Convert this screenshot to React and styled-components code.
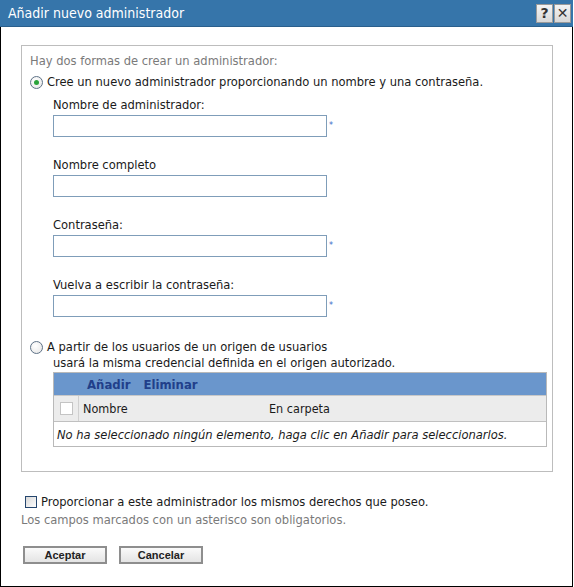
import React from "react";
import styled, { createGlobalStyle } from "styled-components";

const Global = createGlobalStyle`
  html, body { margin: 0; padding: 0; background: #fff; }
  body { font-family: "DejaVu Sans Condensed", "DejaVu Sans", sans-serif; font-size: 12.8px; color: #1a1a1a; }
`;

const Dialog = styled.div`
  width: 573px;
  height: 587px;
  box-sizing: border-box;
  border: 1px solid #000;
  border-top: none;
  display: flex;
  flex-direction: column;
  background: #fff;
`;

const TitleBar = styled.div`
  height: 27px;
  margin: 0 -1px;
  background: #3675aa;
  border-bottom: 1px solid #2a5f8c;
  display: flex;
  align-items: center;
  justify-content: space-between;
  padding: 0 2px 0 8px;
  box-sizing: border-box;
`;

const Title = styled.span`
  color: #fff;
  font-size: 14px;
  line-height: 16px;
`;

const TitleButtons = styled.div`
  display: flex;
  gap: 1px;
`;

const TitleButton = styled.span`
  width: 17px;
  height: 19px;
  box-sizing: border-box;
  background: linear-gradient(#f4f4f4, #d8d8d8);
  border: 1px solid #9a9a9a;
  color: #333;
  font-family: "DejaVu Sans", sans-serif;
  font-weight: bold;
  font-size: 14px;
  display: flex;
  align-items: center;
  justify-content: center;
`;

const Content = styled.div`
  padding: 18px 0 0 20px;
`;

const Fieldset = styled.div`
  width: 532px;
  box-sizing: border-box;
  border: 1px solid #bdbdbd;
  padding: 7px 5px 24px 8px;
`;

const Muted = styled.div`
  color: #7a7a7a;
  line-height: 16px;
  margin-left: ${(p) => p.$indent || 0}px;
  margin-top: ${(p) => p.$top || 0}px;
`;

const RadioRow = styled.label`
  display: flex;
  align-items: center;
  gap: 4px;
  line-height: 16px;
  margin-top: ${(p) => p.$top || 0}px;
`;

const Radio = styled.span`
  width: 13px;
  height: 13px;
  box-sizing: border-box;
  border-radius: 50%;
  border: 1px solid #5e7287;
  background: radial-gradient(circle at 40% 35%, #ffffff, #e4e4e4);
  display: inline-flex;
  align-items: center;
  justify-content: center;
  &::after {
    content: "";
    width: 5px;
    height: 5px;
    border-radius: 50%;
    background: ${(p) => (p.$checked ? "#2aa33a" : "transparent")};
  }
`;

const Indent = styled.div`
  padding-left: 23px;
`;

const Field = styled.div`
  margin-top: ${(p) => p.$top}px;
`;

const Label = styled.div`
  line-height: 16px;
`;

const InputRow = styled.div`
  display: flex;
  align-items: flex-start;
  margin-top: 2px;
`;

const Input = styled.div`
  width: 274px;
  height: 22px;
  box-sizing: border-box;
  border: 1px solid #7f9db9;
  background: #fff;
`;

const Asterisk = styled.span`
  color: #3d68c9;
  font-size: 9px;
  line-height: 9px;
  margin: 6px 0 0 2px;
`;

const Table = styled.div`
  margin-top: 1px;
  width: 494px;
  box-sizing: border-box;
  border: 1px solid #b9b9b9;
`;

const Toolbar = styled.div`
  height: 22px;
  background: #6a96cc;
  display: flex;
  align-items: center;
  gap: 13px;
  padding-left: 33px;
`;

const ToolLink = styled.span`
  color: #213f8a;
  font-size: 13px;
  font-weight: 600;
`;

const HeaderRow = styled.div`
  height: 25px;
  background: #ececec;
  border-top: 1px solid #c8c8c8;
  border-bottom: 1px solid #c0c0c0;
  display: flex;
  align-items: center;
`;

const CheckCell = styled.div`
  width: 25px;
  height: 100%;
  border-right: 1px solid #d0d0d0;
  display: flex;
  align-items: center;
  justify-content: center;
  box-sizing: border-box;
`;

const SmallBox = styled.span`
  width: 13px;
  height: 13px;
  box-sizing: border-box;
  border: 1px solid #c4c4c4;
  background: #fff;
`;

const HeaderCell = styled.div`
  width: ${(p) => p.$w}px;
  padding-left: 4px;
  font-size: 12.5px;
`;

const EmptyRow = styled.div`
  height: 24px;
  display: flex;
  align-items: center;
  padding-left: 3px;
  font-style: italic;
`;

const CheckRow = styled.label`
  display: flex;
  align-items: center;
  gap: 4px;
  margin: 22px 0 0 4px;
  line-height: 16px;
`;

const Checkbox = styled.span`
  width: 12px;
  height: 12px;
  box-sizing: border-box;
  border: 1px solid #25466e;
  background: linear-gradient(135deg, #d8d8d8, #fdfdfd);
`;

const Buttons = styled.div`
  display: flex;
  gap: 12px;
  margin: 18px 0 0 2px;
`;

const Button = styled.button`
  width: 84px;
  height: 18px;
  box-sizing: border-box;
  border: 2px solid #8e8e8e;
  background: linear-gradient(#fafafa, #e4e4e4);
  font-family: "Liberation Sans", Arial, sans-serif;
  font-weight: bold;
  font-size: 11px;
  color: #222;
  padding: 0;
  line-height: 14px;
`;

const fields = [
  { label: "Nombre de administrador:", req: true },
  { label: "Nombre completo", req: false },
  { label: "Contraseña:", req: true },
  { label: "Vuelva a escribir la contraseña:", req: true },
];

export default function App() {
  return (
    <>
      <Global />
      <Dialog>
        <TitleBar>
          <Title>Añadir nuevo administrador</Title>
          <TitleButtons>
            <TitleButton>?</TitleButton>
            <TitleButton>✕</TitleButton>
          </TitleButtons>
        </TitleBar>
        <Content>
          <Fieldset>
            <Muted>Hay dos formas de crear un administrador:</Muted>
            <RadioRow $top={5}>
              <Radio $checked />
              Cree un nuevo administrador proporcionando un nombre y una contraseña.
            </RadioRow>
            <Indent>
              {fields.map((f, i) => (
                <Field key={f.label} $top={i === 0 ? 7 : 20}>
                  <Label>{f.label}</Label>
                  <InputRow>
                    <Input />
                    {f.req && <Asterisk>*</Asterisk>}
                  </InputRow>
                </Field>
              ))}
            </Indent>
            <RadioRow $top={22}>
              <Radio />
              A partir de los usuarios de un origen de usuarios
            </RadioRow>
            <Indent>
              <Label>usará la misma credencial definida en el origen autorizado.</Label>
              <Table>
                <Toolbar>
                  <ToolLink>Añadir</ToolLink>
                  <ToolLink>Eliminar</ToolLink>
                </Toolbar>
                <HeaderRow>
                  <CheckCell>
                    <SmallBox />
                  </CheckCell>
                  <HeaderCell $w={182}>Nombre</HeaderCell>
                  <HeaderCell $w={200}>En carpeta</HeaderCell>
                </HeaderRow>
                <EmptyRow>
                  No ha seleccionado ningún elemento, haga clic en Añadir para seleccionarlos.
                </EmptyRow>
              </Table>
            </Indent>
          </Fieldset>
          <CheckRow>
            <Checkbox />
            Proporcionar a este administrador los mismos derechos que poseo.
          </CheckRow>
          <Muted $top={2}>Los campos marcados con un asterisco son obligatorios.</Muted>
          <Buttons>
            <Button>Aceptar</Button>
            <Button>Cancelar</Button>
          </Buttons>
        </Content>
      </Dialog>
    </>
  );
}
